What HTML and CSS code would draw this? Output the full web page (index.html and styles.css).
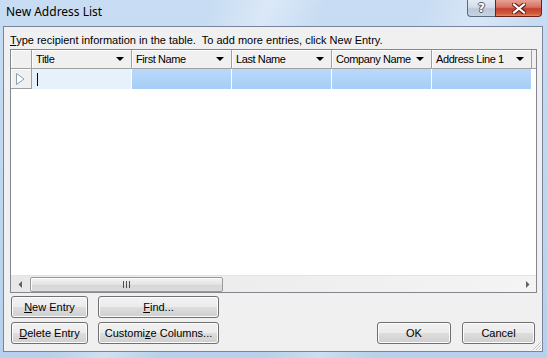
FILE: index.html
```html
<!DOCTYPE html>
<html lang="en">
<head>
  <meta charset="UTF-8">
  <title>New Address List</title>
  <link rel="stylesheet" href="styles.css">
</head>
<body>
<div class="window">
  <div class="titlebar">
    <span class="caption">New Address List</span>
    <div class="caption-buttons">
      <div class="cap-btn help"><span>?</span></div>
      <div class="cap-btn close">
        <svg width="14" height="11" viewBox="0 0 14 11">
          <path d="M2 1.5 L12 9.5 M12 1.5 L2 9.5" stroke="#5a1a12" stroke-width="4.2" stroke-linecap="square" fill="none"/>
          <path d="M2 1.5 L12 9.5 M12 1.5 L2 9.5" stroke="#ffffff" stroke-width="2.2" stroke-linecap="square" fill="none"/>
        </svg>
      </div>
    </div>
  </div>

  <div class="client">
    <div class="hint"><u>T</u>ype recipient information in the table.&nbsp; To add more entries, click New Entry.</div>

    <div class="grid">
      <div class="grid-head">
        <div class="corner"></div>
        <div class="col">Title<span class="arrow"></span></div>
        <div class="col">First Name<span class="arrow"></span></div>
        <div class="col">Last Name<span class="arrow"></span></div>
        <div class="col">Company Name<span class="arrow"></span></div>
        <div class="col">Address Line 1<span class="arrow"></span></div>
        <div class="filler"></div>
      </div>
      <div class="grid-row">
        <div class="selector">
          <svg width="9" height="12" viewBox="0 0 9 12">
            <path d="M0.5 0.5 L8 6 L0.5 11.5 Z" fill="#ffffff" stroke="#8c9cb2" stroke-width="1"/>
          </svg>
        </div>
        <div class="cell current"><span class="caret"></span></div>
        <div class="cell sel"></div>
        <div class="cell sel"></div>
        <div class="cell sel"></div>
        <div class="cell sel"></div>
      </div>
      <div class="grid-body"></div>
      <div class="hscroll">
        <div class="sb-btn">
          <svg width="4" height="7" viewBox="0 0 4 7"><path d="M4 0 L0.5 3.5 L4 7 Z" fill="#606060"/></svg>
        </div>
        <div class="sb-track">
          <div class="thumb"><span class="grip-lines"></span></div>
        </div>
        <div class="sb-btn">
          <svg width="4" height="7" viewBox="0 0 4 7"><path d="M0 0 L3.5 3.5 L0 7 Z" fill="#606060"/></svg>
        </div>
      </div>
    </div>

    <div class="actions">
      <div class="edit-buttons">
        <button class="btn narrow"><u>N</u>ew Entry</button>
        <button class="btn wide"><u>F</u>ind...</button>
        <button class="btn narrow"><u>D</u>elete Entry</button>
        <button class="btn wide">Customi<u>z</u>e Columns...</button>
      </div>
      <div class="dialog-buttons">
        <button class="btn ok">OK</button>
        <button class="btn cancel">Cancel</button>
      </div>
    </div>

    <div class="size-grip">
      <svg width="11" height="11" viewBox="0 0 11 11">
        <path d="M10 2 L2 10 M10 5 L5 10 M10 8 L8 10" stroke="#b8bec6" stroke-width="1" fill="none"/>
        <path d="M11 2 L2 11 M11 5 L5 11 M11 8 L8 11" stroke="#ffffff" stroke-width="1" fill="none"/>
      </svg>
    </div>
  </div>
</div>
</body>
</html>
```

FILE: styles.css
```css
* {
    box-sizing: border-box;
}

html, body {
    margin: 0;
    padding: 0;
    width: 100%;
    height: 100%;
}

body {
    background: #bcd4ee;
}

.window {
    width: 547px;
    height: 358px;
    display: flex;
    flex-direction: column;
    background:
        linear-gradient(115deg, rgba(255,255,255,0) 30%, rgba(255,255,255,0.35) 38%, rgba(255,255,255,0) 46%, rgba(255,255,255,0) 60%, rgba(255,255,255,0.3) 68%, rgba(255,255,255,0) 76%),
        linear-gradient(#c8ddf3, #b7d0eb);
    font-family: 'Liberation Sans', Arial, sans-serif;
    font-size: 11px;
    color: #000;
}

/* title bar */

.titlebar {
    height: 26px;
    flex: none;
    display: flex;
    align-items: flex-start;
}

.titlebar .caption {
    font-family: 'Noto Sans', 'Liberation Sans', sans-serif;
    font-size: 12px;
    line-height: 16px;
    margin: 4px 0 0 6px;
    color: #000;
}

.caption-buttons {
    margin-left: auto;
    margin-right: 5px;
    display: flex;
}

.cap-btn {
    height: 17px;
    display: flex;
    align-items: center;
    justify-content: center;
    border: 1px solid #5c6b80;
    border-top: none;
}

.cap-btn.help {
    width: 28px;
    border-right: none;
    border-radius: 0 0 0 4px;
    background: linear-gradient(#e4ebf4 0%, #d2dde9 45%, #b9c8d9 55%, #c6d3e2 100%);
}

.cap-btn.help span {
    font-family: 'DejaVu Sans', sans-serif;
    font-weight: bold;
    font-size: 12px;
    line-height: 12px;
    color: #ffffff;
    text-shadow: 1px 0 #4c5a6c, -1px 0 #4c5a6c, 0 1px #4c5a6c, 0 -1px #4c5a6c;
}

.cap-btn.close {
    width: 47px;
    border-color: #6b2119;
    border-radius: 0 0 4px 0;
    background: linear-gradient(#e8a196 0%, #d8705f 45%, #c4402c 55%, #d05a3f 85%, #e08a5e 100%);
}

/* client area */

.client {
    position: relative;
    flex: none;
    height: 326px;
    margin: 0 4px 0 3px;
    border: 1px solid #77849a;
    background: #f0f0f0;
    display: flex;
    flex-direction: column;
}

.hint {
    margin: 6px 0 0 6px;
    line-height: 14px;
    height: 16px;
}

/* the address table */

.grid {
    margin-left: 6px;
    width: 527px;
    height: 244px;
    border: 1px solid #828790;
    background: #ffffff;
    display: flex;
    flex-direction: column;
}

.grid-head {
    display: flex;
    height: 19px;
    flex: none;
    background: #f0f0f0;
}

.grid-head .corner,
.grid-head .col {
    border-right: 1px solid #a0a0a0;
    border-bottom: 1px solid #a0a0a0;
    box-shadow: inset 1px 1px #ffffff;
}

.grid-head .corner {
    width: 21px;
}

.grid-head .col {
    width: 100px;
    display: flex;
    align-items: center;
    padding: 0 0 0 4px;
    line-height: 18px;
    white-space: nowrap;
    letter-spacing: -0.4px;
}

.grid-head .filler {
    flex: 1;
    border-bottom: 1px solid #a0a0a0;
}

.arrow {
    flex: none;
    margin-left: auto;
    margin-right: 7px;
    width: 0;
    height: 0;
    border-left: 4px solid transparent;
    border-right: 4px solid transparent;
    border-top: 4px solid #000;
}

.grid-row {
    display: flex;
    height: 20px;
    flex: none;
}

.grid-row .selector {
    width: 21px;
    background: #f0f0f0;
    border-right: 1px solid #a0a0a0;
    border-bottom: 1px solid #a0a0a0;
    box-shadow: inset 1px 1px #ffffff;
    display: flex;
    align-items: center;
    padding-left: 5px;
}

.grid-row .cell {
    width: 100px;
    border-right: 1px solid #ffffff;
}

.grid-row .cell.current {
    background: #e7f1fc;
    display: flex;
    align-items: center;
    padding-left: 5px;
}

.grid-row .cell.sel {
    background: linear-gradient(#b9d9fa, #a6cdf6);
}

.caret {
    width: 1px;
    height: 13px;
    background: #000;
}

.grid-body {
    flex: 1;
}

.hscroll {
    height: 17px;
    flex: none;
    display: flex;
    background: linear-gradient(90deg, #e8e8e8, #f4f4f4);
    border-top: 1px solid #e4e4e4;
}

.sb-btn {
    width: 17px;
    display: flex;
    align-items: center;
    justify-content: center;
}

.sb-track {
    flex: 1;
    padding: 1px 0;
}

.thumb {
    margin-left: 2px;
    width: 193px;
    height: 15px;
    border: 1px solid #9a9a9a;
    border-radius: 2px;
    background: linear-gradient(#f3f3f3, #e4e4e4 50%, #d6d6d6 51%, #dcdcdc);
    box-shadow: inset 1px 1px #fbfbfb;
    display: flex;
    align-items: center;
    justify-content: center;
}

.grip-lines {
    width: 7px;
    height: 7px;
    background: repeating-linear-gradient(90deg, #4d4d4d 0 1px, transparent 1px 3px);
}

/* buttons */

.actions {
    margin: 3px 7px 0 7px;
    display: flex;
    justify-content: space-between;
    align-items: flex-end;
}

.edit-buttons {
    display: grid;
    grid-template-columns: 77px 121px;
    column-gap: 10px;
    row-gap: 4px;
}

.dialog-buttons {
    display: flex;
    gap: 11px;
}

.btn {
    height: 22px;
    padding: 0;
    font-family: 'Liberation Sans', Arial, sans-serif;
    font-size: 11px;
    color: #000;
    border: 1px solid #707070;
    border-radius: 3px;
    background: linear-gradient(#f2f2f2 0%, #ebebeb 50%, #dddddd 51%, #cfcfcf 100%);
    box-shadow: inset 0 0 0 1px #fcfcfc;
}

.btn.ok {
    width: 74px;
}

.btn.cancel {
    width: 73px;
}

.size-grip {
    position: absolute;
    right: 0;
    bottom: 0;
    width: 11px;
    height: 11px;
    line-height: 0;
}
```
